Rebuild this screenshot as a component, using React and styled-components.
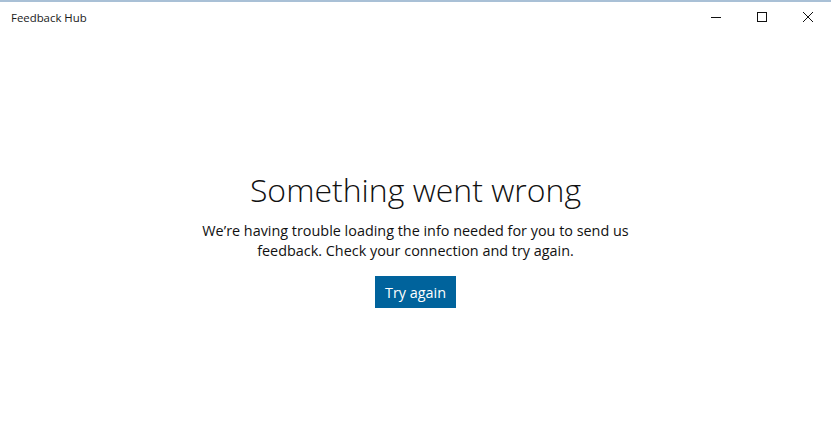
import styled, { createGlobalStyle } from 'styled-components';

const GlobalStyle = createGlobalStyle`
  html, body {
    margin: 0;
    padding: 0;
    background: #fff;
  }
  body {
    font-family: 'Open Sans', 'Noto Sans', sans-serif;
    color: #000;
  }
`;

const Window = styled.div`
  width: 831px;
  height: 438px;
  box-sizing: border-box;
  border-top: 2px solid #a9c0d6;
  display: flex;
  flex-direction: column;
  background: #fff;
`;

const TitleBar = styled.div`
  height: 30px;
  display: flex;
  align-items: center;
  justify-content: space-between;
`;

const Title = styled.span`
  padding-left: 11px;
  font-size: 11.4px;
  color: #1a1a1a;
`;

const Controls = styled.div`
  display: flex;
  height: 100%;
`;

const ControlButton = styled.button`
  width: 46px;
  height: 100%;
  border: none;
  background: transparent;
  padding: 0;
  display: flex;
  align-items: center;
  justify-content: center;
  color: #111;
`;

const Main = styled.main`
  flex: 1;
  display: flex;
  flex-direction: column;
  align-items: center;
  padding-top: 137px;
`;

const Heading = styled.h1`
  margin: 0;
  font-size: 32px;
  font-weight: 300;
  line-height: 42px;
  color: #111;
`;

const Message = styled.p`
  margin: 10px 0 0;
  font-size: 14.4px;
  line-height: 20px;
  text-align: center;
  color: #111;
`;

const Button = styled.button`
  margin-top: 15px;
  height: 32px;
  padding: 0 10px;
  border: none;
  background: #00639c;
  color: #fff;
  font-family: inherit;
  font-size: 14.4px;
`;

const App = () => {
  return (
    <>
      <GlobalStyle />
      <Window>
        <TitleBar>
          <Title>Feedback Hub</Title>
          <Controls>
            <ControlButton aria-label='Minimize'>
              <svg width='10' height='10' viewBox='0 0 10 10'>
                <path d='M0 5.5h10' stroke='currentColor' strokeWidth='1' />
              </svg>
            </ControlButton>
            <ControlButton aria-label='Maximize'>
              <svg width='10' height='10' viewBox='0 0 10 10'>
                <rect x='0.5' y='0.5' width='9' height='9' fill='none' stroke='currentColor' strokeWidth='1' />
              </svg>
            </ControlButton>
            <ControlButton aria-label='Close'>
              <svg width='10' height='10' viewBox='0 0 10 10'>
                <path d='M0 0l10 10M10 0L0 10' stroke='currentColor' strokeWidth='1' />
              </svg>
            </ControlButton>
          </Controls>
        </TitleBar>
        <Main>
          <Heading>Something went wrong</Heading>
          <Message>
            We’re having trouble loading the info needed for you to send us
            <br />
            feedback. Check your connection and try again.
          </Message>
          <Button>Try again</Button>
        </Main>
      </Window>
    </>
  );
};

export default App;
